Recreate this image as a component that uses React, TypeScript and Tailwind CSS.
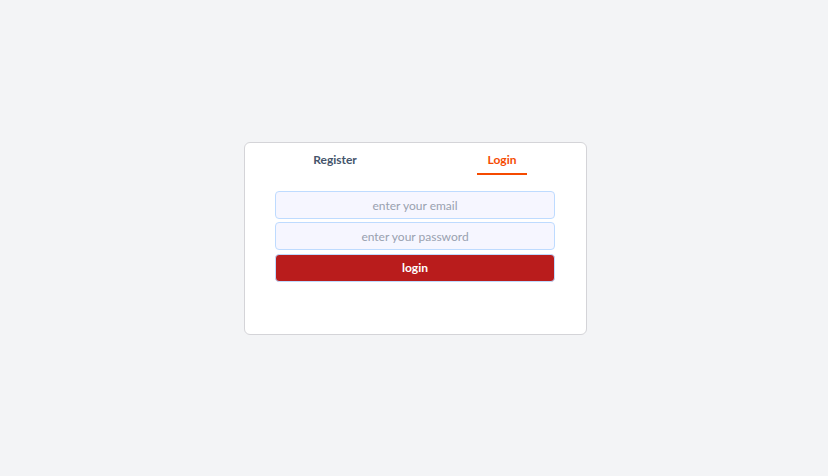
import { useState } from 'react'

export default function App() {
  const [tab, setTab] = useState<'register' | 'login'>('login')

  return (
    <div
      className="min-h-screen bg-gray-100 flex items-center justify-center pl-[2px] pt-[1px]"
      style={{ fontFamily: 'Lato, "Open Sans", sans-serif' }}
    >
      <div className="w-[343px] h-[193px] bg-white border border-[#d4d4d8] rounded-md">
        {/* Tabs */}
        <div className="grid grid-cols-2 pl-[7px] mt-[9px]">
          <div className="flex justify-center">
            <button
              onClick={() => setTab('register')}
              className={`px-[11px] pb-[5px] text-[12px] leading-4 font-bold border-b-2 ${
                tab === 'register' ? 'text-orange-600 border-orange-600' : 'text-slate-600 border-transparent'
              }`}
            >
              Register
            </button>
          </div>
          <div className="flex justify-center">
            <button
              onClick={() => setTab('login')}
              className={`px-[11px] pb-[5px] text-[12px] leading-4 font-bold border-b-2 ${
                tab === 'login' ? 'text-orange-600 border-orange-600' : 'text-slate-600 border-transparent'
              }`}
            >
              Login
            </button>
          </div>
        </div>

        {/* Form */}
        <form onSubmit={e => e.preventDefault()} className="w-[280px] mx-auto mt-[16px] flex flex-col">
          <input
            type="email"
            placeholder="enter your email"
            className="h-[28px] rounded-[4px] border border-blue-200 bg-[#f6f6ff] text-center text-[12px] text-gray-700 placeholder:text-gray-400 outline-none"
          />
          <input
            type="password"
            placeholder="enter your password"
            className="h-[28px] mt-[3px] rounded-[4px] border border-blue-200 bg-[#f6f6ff] text-center text-[12px] text-gray-700 placeholder:text-gray-400 outline-none"
          />
          <button
            type="submit"
            className="h-[28px] mt-[4px] rounded-[4px] border border-blue-200 bg-[#b91c1c] text-white text-[12px] font-bold"
          >
            login
          </button>
        </form>
      </div>
    </div>
  )
}
